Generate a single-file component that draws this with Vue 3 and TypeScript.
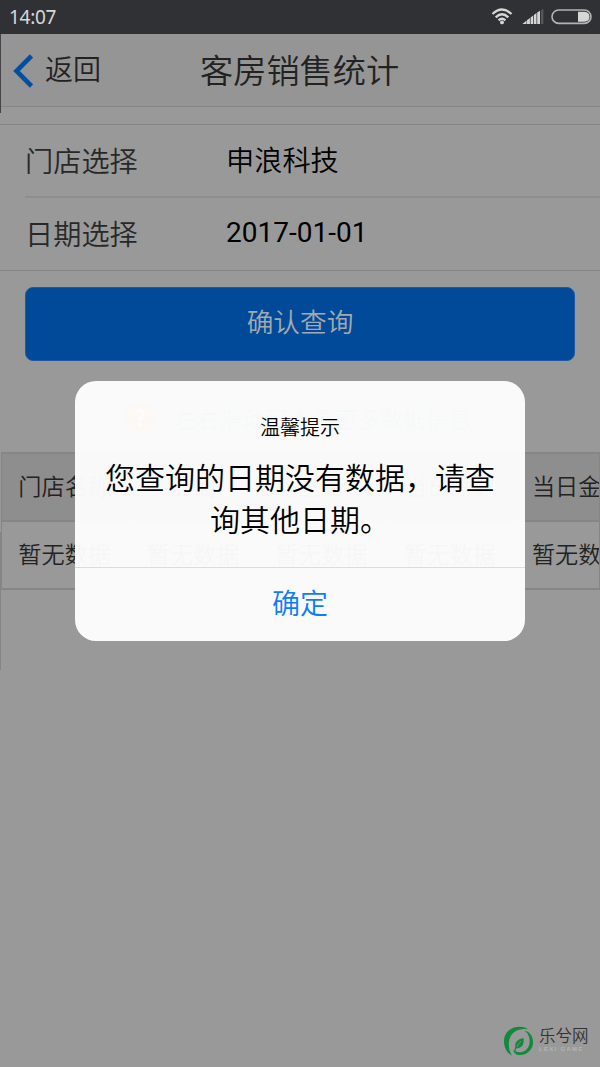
<script setup lang="ts">
interface Field { label: string; value: string; latin: boolean }

const fields: Field[] = [
  { label: '门店选择', value: '申浪科技', latin: false },
  { label: '日期选择', value: '2017-01-01', latin: true },
]
const columns: string[] = ['门店名称', '日期', '房型名称', '当日房数', '当日金额']
</script>

<template>
  <div class="screen">
    <div class="status">
      <span class="clock">14:07</span>
      <svg class="signals" width="114" height="34" viewBox="0 0 114 34">
        <g fill="none" stroke="#d6d6d6" stroke-width="2.4">
          <path d="M6.500 14 Q16 5 25.500 14" />
          <path d="M9.700 17.300 Q16 11.300 22.300 17.300" />
          <path d="M12.600 20.300 Q16 17.300 19.400 20.300" />
        </g>
        <circle cx="16" cy="22.400" r="1.900" fill="#d6d6d6" />
        <g fill="#d6d6d6">
          <path d="M36.500 24 L40.500 20.500 V24Z" />
          <path d="M41 24 V20.300 L43.900 18 V24Z" />
          <path d="M44.600 24 V17.500 L47.200 15.500 V24Z" />
          <path d="M47.900 24 V15 L50.500 13 V24Z" />
          <path d="M51.200 24 V12.500 L54 10.800 V24Z" />
        </g>
        <path d="M55 24 V10 L57.400 8.800 V24Z" fill="#55565a" />
        <rect x="66" y="10" width="39" height="13.400" rx="6.700" fill="none" stroke="#b4b4b4" stroke-width="1.600" />
        <path d="M92 11.800 H98.500 Q103.500 12.500 103.500 16.700 Q103.500 21 98.500 21.700 H92Z" fill="#d6d6d6" />
      </svg>
    </div>

    <header class="nav">
      <svg class="chevron" width="20" height="34" viewBox="0 0 20 34">
        <path d="M18.500 2 L3.500 17 L18.500 32" fill="none" stroke="#0050a2" stroke-width="4.600" />
      </svg>
      <span class="back">返回</span>
      <h1>客房销售统计</h1>
    </header>

    <div class="form">
      <div v-for="f in fields" :key="f.label" class="field">
        <span class="label">{{ f.label }}</span>
        <span class="value" :class="{ latin: f.latin }">{{ f.value }}</span>
      </div>
    </div>

    <button class="query">确认查询</button>

    <div class="hint"><span class="mark">?</span><span>左右滑动可查看更多数据信息</span></div>

    <div class="table">
      <div class="row head"><div v-for="c in columns" :key="c" class="cell">{{ c }}</div></div>
      <div class="row"><div v-for="c in columns" :key="c" class="cell">暂无数据</div></div>
    </div>

    <div class="edge top"></div>
    <div class="edge low"></div>

    <div class="dialog">
      <div class="body">
        <div class="title">温馨提示</div>
        <div class="message">您查询的日期没有数据，请查询其他日期。</div>
      </div>
      <div class="ok">确定</div>
    </div>

    <div class="brand">
      <svg width="32" height="32" viewBox="0 0 32 32">
        <path d="M26.500 5 C18 -2 1 2 1 16 C1 23 4 28 9 30.500 C3.500 22 5 9 14 5.500 C19 3.500 24 3.500 26.500 5Z" fill="#128a3e" />
        <path d="M21 5.500 C28 9 29 22 21.500 26 C17 28.500 12.500 27 10.500 25 C10.500 28 13.500 30.500 18 30 C26 29 30.500 23 30 16.500 C29.700 10.500 26.500 6.500 21 5.500Z" fill="#128a3e" />
        <path d="M20.500 13 C14.500 14 11 17.500 12.500 23.500 C18.500 23.500 21.500 20 20.500 13Z" fill="#128a3e" />
        <path d="M17.500 17 Q13 20 11.500 27" fill="none" stroke="#128a3e" stroke-width="1.200" />
        <path d="M18 16.500 Q15 18.500 13.800 22" fill="none" stroke="#999" stroke-width="0.700" />
      </svg>
      <div class="brand-text"><span class="cn">乐兮网</span><span class="en">LEXI GAME</span></div>
    </div>
  </div>
</template>

<style>
body { margin: 0; background: #999; }
</style>

<style scoped>
.screen {
  position: relative; width: 600px; height: 1067px; overflow: hidden; box-sizing: border-box;
  background: #999; color: #222; font-family: "Noto Sans CJK SC", sans-serif; font-weight: 350;
}
.status { height: 34px; background: #303135; display: flex; justify-content: space-between; }
.clock { font: 400 19px/34px "Noto Sans", sans-serif; letter-spacing: -.3px; color: #d8d8d8; padding-left: 9px; }
.signals { display: block; }
.nav {
  height: 72px; border-bottom: 1px solid #868686; background: #959595;
  display: flex; align-items: center; padding-left: 13px;
}
.chevron { display: block; margin-top: 1px; }
.back { font-size: 28px; line-height: 40px; margin-left: 12px; margin-top: -4px; }
.nav h1 { margin: -2px 0 0 99px; font-size: 33.200px; line-height: 48px; font-weight: 350; }
.form { margin-top: 17px; border-top: 1px solid #858585; border-bottom: 1px solid #858585; }
.field { height: 71px; margin-left: 25px; display: flex; align-items: center; font-size: 28.200px; line-height: 40px; }
.field + .field { border-top: 2px solid #8e8e8e; height: 72px; }
.label { width: 201px; margin-top: -2px; color: #282828; }
.value { color: #000; margin-top: -4px; }
.latin { font-family: Roboto, sans-serif; font-size: 28px; font-weight: 400; margin-top: -2px; }
.query {
  display: block; width: 550px; height: 74px; margin: 16px 25px 0; padding: 0 0 6px; border: 1px solid #1d58a0;
  border-radius: 8px; background: #004a99; color: #a3a9b0; font: 350 26.700px/40px "Noto Sans CJK SC", sans-serif;
}
.hint {
  height: 91px; padding: 22px 0 0 125px; box-sizing: border-box;
  display: flex; align-items: center; font-size: 23px; color: #108050;
}
.mark {
  width: 30px; height: 30px; border-radius: 50%; background: #d07a10; color: #eee;
  text-align: center; line-height: 28px; margin-right: 18px; font-weight: 700;
}
.table { width: 599px; margin-left: 1px; box-sizing: border-box; overflow: hidden; border: solid #868686; border-width: 2px 1px; }
.row { display: grid; grid-template-columns: repeat(5, 128.400px); height: 66px; }
.head { background: #8e8e8e; border-bottom: 2px solid #868686; }
.cell {
  display: flex; align-items: center; justify-content: center; font-size: 23.200px;
  border-right: 1px solid #868686; box-sizing: border-box; padding: 0 2px 5px 0;
}
.edge { position: absolute; left: 0; width: 1px; }
.top { top: 34px; height: 79px; background: #454347; }
.low { top: 532px; height: 138px; background: #858585; }
.dialog {
  position: absolute; left: 75px; top: 380.500px; width: 450px; height: 260.500px; border-radius: 21px; overflow: hidden;
  background: rgba(253, 253, 253, .968); color: #000; text-align: center;
}
.body { height: 155px; border-bottom: 1px solid #dcdcdc; padding: 31px 28px 0; }
.title { font-size: 20px; line-height: 30px; }
.message { margin-top: 13px; font-size: 30px; line-height: 42px; }
.ok { color: #0b7cff; font-size: 28px; line-height: 68px; }
.brand { position: absolute; left: 503px; top: 1025px; display: flex; }
.brand-text { margin-left: 4px; display: flex; flex-direction: column; }
.cn { font-size: 16.500px; line-height: 20px; color: #333; }
.en { font: 700 6px/8px "Liberation Sans", sans-serif; letter-spacing: 1.300px; color: #b4b4b4; white-space: nowrap; }
</style>
